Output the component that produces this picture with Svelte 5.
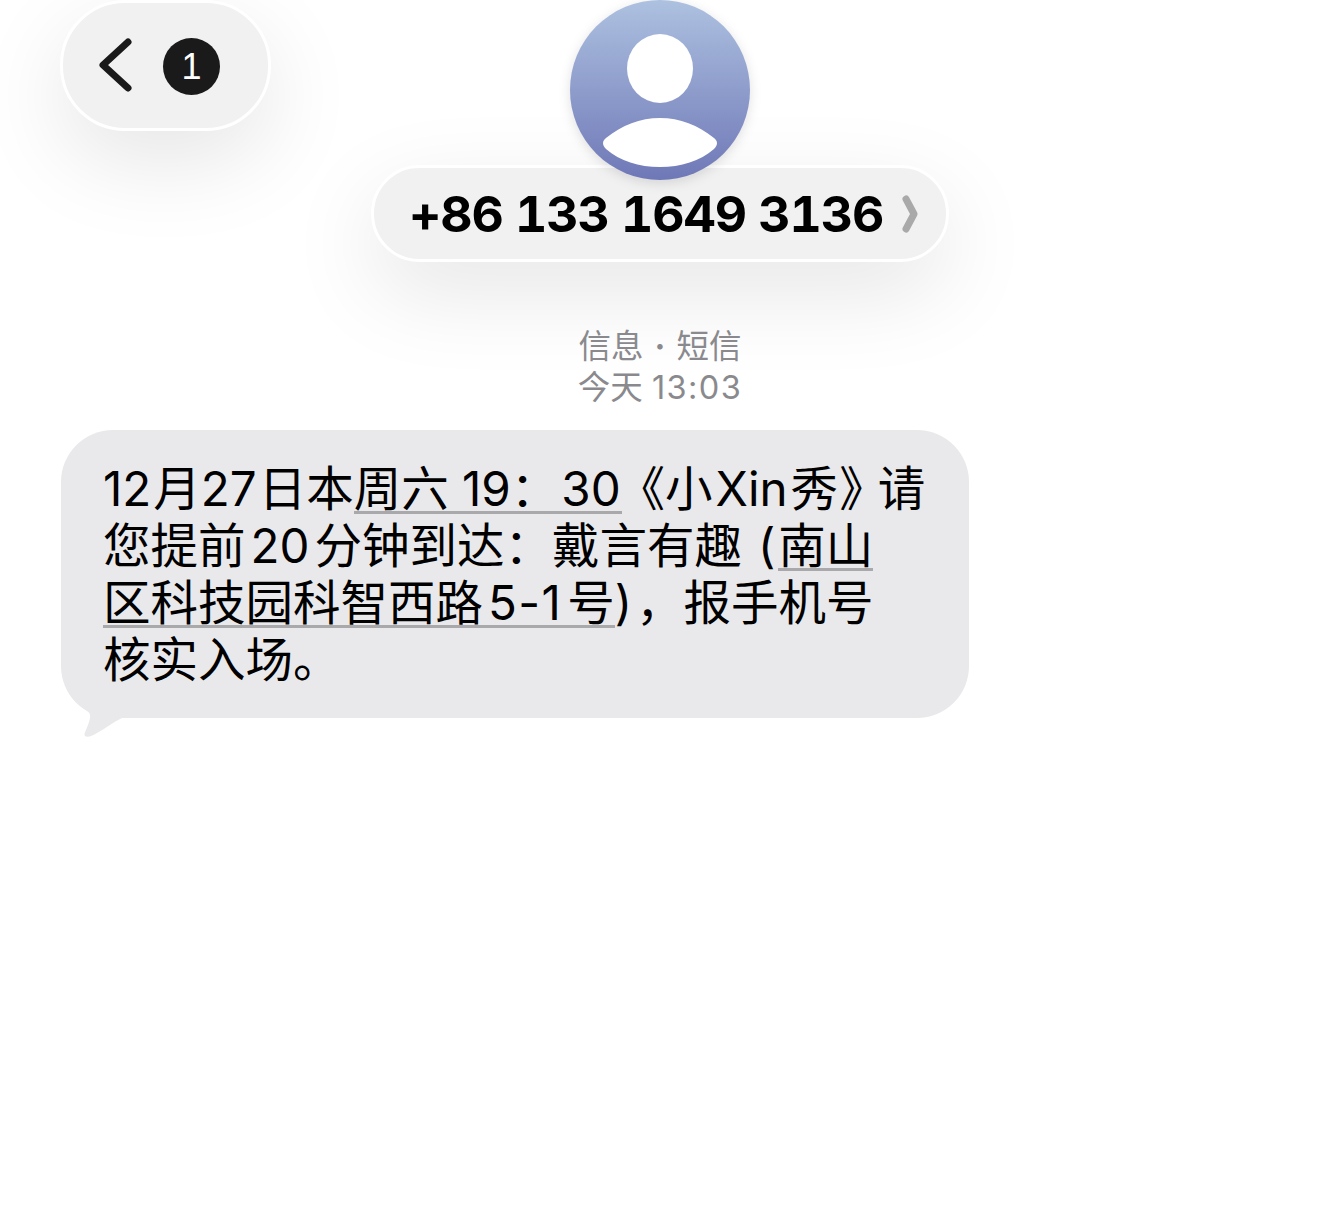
<script lang="ts">
	const phone = '+86 133 1649 3136';
</script>

<div class="screen">
	<header class="header">
		<button type="button" class="back" aria-label="Back">
			<svg class="back__chevron" width="34" height="54" viewBox="0 0 34 54" fill="none" stroke="#1a1a1a" stroke-width="7" stroke-linecap="round" stroke-linejoin="round">
				<path d="M29 4 L4 27 L29 50" />
			</svg>
			<span class="back__badge">1</span>
		</button>

		<div class="contact">
			<svg class="avatar" width="180" height="180" viewBox="0 0 180 180">
				<defs>
					<linearGradient id="avatar-bg" x1="0" y1="0" x2="0" y2="1">
						<stop offset="0" stop-color="#adc1e0" />
						<stop offset="1" stop-color="#6f78b7" />
					</linearGradient>
				</defs>
				<circle cx="90" cy="90" r="90" fill="url(#avatar-bg)" />
				<ellipse cx="90" cy="68.5" rx="33" ry="34.5" fill="#fff" />
				<path d="M36 138 C52 125 70 118 90 118 C110 118 128 125 144 138 C148 141 148 145 144 149 C130 161 111 167 90 167 C69 167 50 161 36 149 C32 145 32 141 36 138 Z" fill="#fff" />
			</svg>
			<div class="contact__pill">
				<span class="contact__phone">{phone}</span>
				<svg width="16" height="38" viewBox="0 0 16 38" fill="none" stroke="#a9a9a9" stroke-width="7" stroke-linecap="round" stroke-linejoin="round">
					<path d="M4 4 L12 19 L4 34" />
				</svg>
			</div>
		</div>
	</header>

	<div class="meta">
		<div>信息<span class="meta__dot">·</span>短信</div>
		<div>今天 <span class="meta__time">13:03</span></div>
	</div>

	<div class="bubble">
		<span class="line"><span class="s">12</span>月<span class="s">27</span>日本<span class="link date">周六 19：<span class="time">30</span></span>《小<span class="x">Xin</span>秀<span class="close">》</span>请</span>
		<span class="line">您提前<span class="l">20</span>分钟到达：戴言有趣<span class="paren">(</span><span class="link">南山</span></span>
		<span class="line"><span class="link">区科技园科智西路<span class="l wide">5-1</span>号</span><span class="paren-r">)</span>，报手机号</span>
		<span class="line">核实入场。</span>
		<svg class="bubble__tail" width="70" height="50" viewBox="0 0 70 50">
			<path d="M6 0 C10 10 17 17 24 21 C30 25 30 28 28 34 C26 41 22 46 24 48 C26 50 31 48 36 45 C44 41 52 34 61 30 L70 0 Z" fill="#e9e9eb" />
		</svg>
	</div>
</div>

<style>
	:global(body) {
		background: #fff;
	}

	.screen {
		width: 1320px;
		min-height: 1217px;
		background: #fff;
		font-family: Inter, "Noto Sans CJK SC", sans-serif;
		overflow: hidden;
	}

	.header {
		display: grid;
		padding: 0 60px;
	}

	.header > * {
		grid-area: 1 / 1;
	}

	.back {
		justify-self: start;
		align-self: start;
		width: 211px;
		height: 131px;
		box-sizing: border-box;
		padding: 0 0 0 36px;
		display: flex;
		align-items: center;
		gap: 30px;
		background: #f1f1f2;
		border: 3px solid #fff;
		border-radius: 65px;
		box-shadow: 0 30px 90px rgba(0, 0, 0, 0.1);
	}

	.back__chevron {
		flex-shrink: 0;
		margin-top: -2px;
	}

	.back__badge {
		width: 57px;
		height: 57px;
		flex-shrink: 0;
		margin-top: 2px;
		display: flex;
		align-items: center;
		justify-content: center;
		border-radius: 50%;
		background: #1a1a1a;
		color: #fff;
		font-size: 36px;
		font-weight: 500;
	}

	.contact {
		justify-self: center;
		display: flex;
		flex-direction: column;
		align-items: center;
	}

	.avatar {
		display: block;
		position: relative;
		z-index: 1;
		filter: drop-shadow(0 3px 6px rgba(0, 0, 0, 0.12));
	}

	.contact__pill {
		width: 578px;
		height: 97px;
		box-sizing: border-box;
		margin-top: -15px;
		padding: 0 28px 0 35px;
		display: flex;
		align-items: center;
		justify-content: space-between;
		background: #f1f1f2;
		border: 3px solid #fff;
		border-radius: 49px;
		box-shadow: 0 30px 90px rgba(0, 0, 0, 0.1);
	}

	.contact__phone {
		font-family: Inter, sans-serif;
		font-size: 50px;
		font-weight: 700;
		font-variant-numeric: tabular-nums;
		letter-spacing: -1.1px;
		color: #000;
		white-space: pre;
	}

	.meta {
		margin-top: 64px;
		text-align: center;
		font-size: 32.5px;
		line-height: 41px;
		color: #8a8a8e;
	}

	.meta__dot {
		margin: 0 11px;
		font-weight: 700;
	}

	.meta__time {
		letter-spacing: 1.4px;
	}

	.bubble {
		position: relative;
		width: 908px;
		box-sizing: border-box;
		margin: 22px 0 0 61px;
		padding: 30px 20px 30px 42px;
		background: #e9e9eb;
		border-radius: 52px;
		font-size: 47.5px;
		line-height: 57px;
		color: #000;
	}

	.line {
		display: block;
		white-space: pre;
	}

	.s {
		margin: 0 2px 0 0;
	}

	.l {
		padding: 0 5px;
	}

	.wide {
		letter-spacing: 1.4px;
	}

	.date {
		margin-right: -4px;
	}

	.time {
		padding: 0 1px 0 3px;
	}

	.x {
		margin: 0 3px 0 3px;
	}

	.close {
		margin: 0 14px 0 2px;
		font-feature-settings: "palt";
	}

	.paren {
		margin: 0 3px 0 16px;
	}

	.paren-r {
		margin-right: 4px;
	}

	.link {
		background: linear-gradient(#a9a9ac, #a9a9ac) no-repeat 0 calc(100% - 3px) / 100% 3px;
	}

	.bubble__tail {
		position: absolute;
		left: 0;
		bottom: -20px;
		overflow: visible;
	}
</style>
